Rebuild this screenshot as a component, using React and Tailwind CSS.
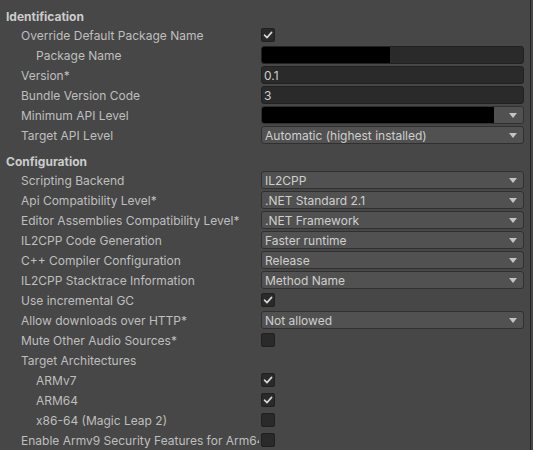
import React from "react";

const Check = ({ checked }) => (
  <div className="w-[14px] h-[14px] rounded-[2px] bg-[#2a2a2a] border border-[#202020] flex items-center justify-center">
    {checked && (
      <svg width="10" height="10" viewBox="0 0 10 10">
        <path d="M1.5 5.2 L4 7.6 L8.6 2.4" fill="none" stroke="#d8d8d8" strokeWidth="1.6" strokeLinecap="round" strokeLinejoin="round" />
      </svg>
    )}
  </div>
);

const Arrow = () => (
  <svg width="8" height="5" viewBox="0 0 8 5" className="shrink-0">
    <path d="M0 0 L8 0 L4 5 Z" fill="#c4c4c4" />
  </svg>
);

const TextField = ({ value, redact }) => (
  <div className="w-[263px] h-[18px] rounded-[3px] bg-[#2a2a2a] border border-[#212121] flex items-center overflow-hidden text-[#cfcfcf]">
    {redact ? (
      <div className="h-full bg-black" style={{ width: redact }} />
    ) : (
      <span className="pl-[2px] pt-[1px] leading-[15px]">{value}</span>
    )}
  </div>
);

const Dropdown = ({ value, redact }) => (
  <div className="w-[263px] h-[18px] rounded-[3px] bg-[#515151] border border-[#303030] flex items-center overflow-hidden text-[#cfcfcf]">
    {redact ? (
      <div className="h-full bg-black" style={{ width: redact }} />
    ) : (
      <span className="pl-[3px] pt-[1px] leading-[15px] whitespace-nowrap">{value}</span>
    )}
    <div className="flex-1" />
    <div className="pr-[6px] flex items-center">
      <Arrow />
    </div>
  </div>
);

const Row = ({ label, indent = 1, children }) => (
  <div className="h-[20px] flex items-center">
    <div
      className={
        "w-[259px] h-[20px] pt-[2px] leading-[18px] shrink-0 overflow-hidden whitespace-nowrap text-[#bfbfbf] " +
        (indent === 2 ? "pl-[36px]" : "pl-[21px]")
      }
    >
      {label}
    </div>
    <div className="ml-[2px] flex items-center">{children}</div>
  </div>
);

const Header = ({ title, className = "" }) => (
  <div className={"h-[19px] pt-[2px] leading-[17px] pl-[6px] font-bold text-[#cccccc] " + className}>{title}</div>
);

export default function App() {
  return (
    <div
      className="w-[533px] h-[450px] bg-[#474747] overflow-hidden flex text-[12px]"
      style={{ fontFamily: "Inter, 'Noto Sans', sans-serif" }}
    >
      <div className="w-[530px] shrink-0 pt-[6px]">
        <Header title="Identification" />
        <Row label="Override Default Package Name">
          <Check checked />
        </Row>
        <Row label="Package Name" indent={2}>
          <TextField redact="128px" />
        </Row>
        <Row label="Version*">
          <TextField value="0.1" />
        </Row>
        <Row label="Bundle Version Code">
          <TextField value="3" />
        </Row>
        <Row label="Minimum API Level">
          <Dropdown redact="232px" />
        </Row>
        <Row label="Target API Level">
          <Dropdown value="Automatic (highest installed)" />
        </Row>
        <Header title="Configuration" className="mt-[6px]" />
        <Row label="Scripting Backend">
          <Dropdown value="IL2CPP" />
        </Row>
        <Row label="Api Compatibility Level*">
          <Dropdown value=".NET Standard 2.1" />
        </Row>
        <Row label="Editor Assemblies Compatibility Level*">
          <Dropdown value=".NET Framework" />
        </Row>
        <Row label="IL2CPP Code Generation">
          <Dropdown value="Faster runtime" />
        </Row>
        <Row label="C++ Compiler Configuration">
          <Dropdown value="Release" />
        </Row>
        <Row label="IL2CPP Stacktrace Information">
          <Dropdown value="Method Name" />
        </Row>
        <Row label="Use incremental GC">
          <Check checked />
        </Row>
        <Row label="Allow downloads over HTTP*">
          <Dropdown value="Not allowed" />
        </Row>
        <Row label="Mute Other Audio Sources*">
          <Check />
        </Row>
        <Row label="Target Architectures" />
        <Row label="ARMv7" indent={2}>
          <Check checked />
        </Row>
        <Row label="ARM64" indent={2}>
          <Check checked />
        </Row>
        <Row label="x86-64 (Magic Leap 2)" indent={2}>
          <Check />
        </Row>
        <Row label="Enable Armv9 Security Features for Arm64">
          <Check />
        </Row>
      </div>
      <div className="w-[1px] shrink-0 bg-[#262626]" />
    </div>
  );
}
